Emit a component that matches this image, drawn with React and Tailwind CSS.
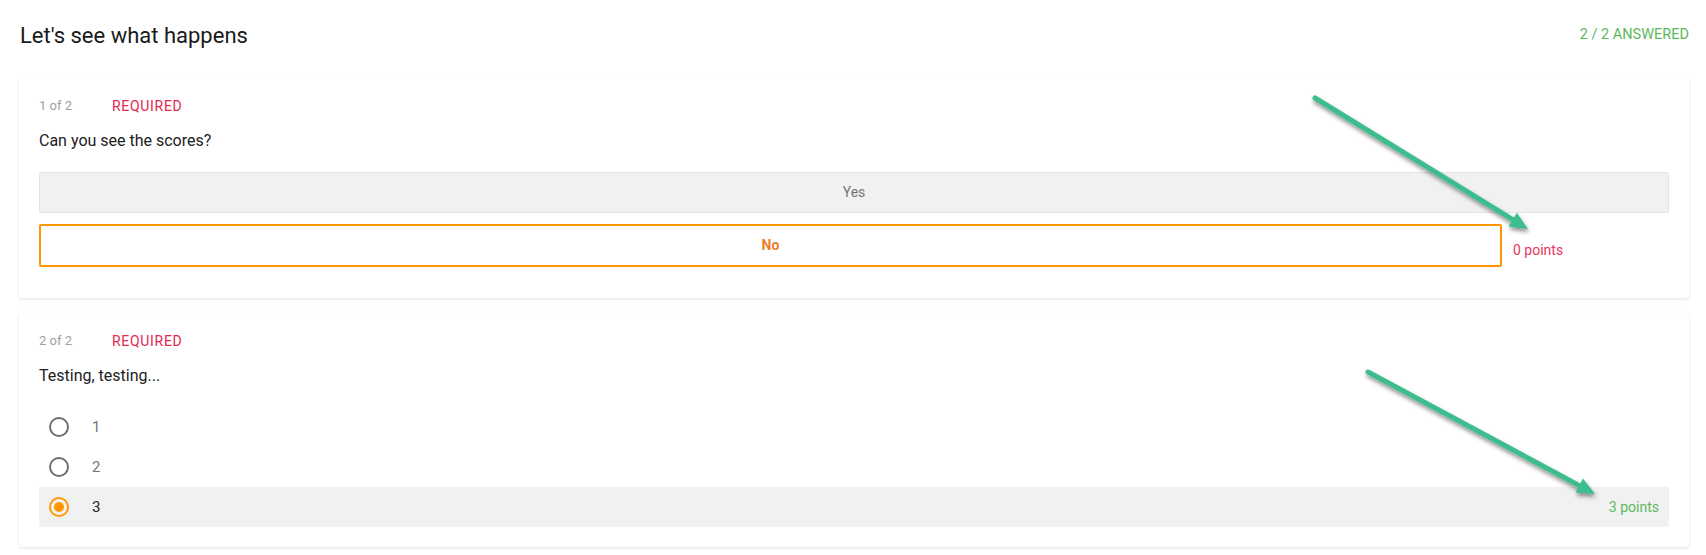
import { useState } from 'react';

const questions = [
  { id: 1, type: 'buttons', text: 'Can you see the scores?', options: ['Yes', 'No'], selected: 'No', points: 0 },
  { id: 2, type: 'radio', text: 'Testing, testing...', options: ['1', '2', '3'], selected: '3', points: 3 },
];

const Meta = ({ index, total }) => (
  <div className="flex items-center h-[20px]">
    <span className="w-[73px] text-[13px] text-[#9e9e9e]">{index} of {total}</span>
    <span className="text-[14px] text-[#e2284f] tracking-[0.7px]">REQUIRED</span>
  </div>
);

const ButtonQuestion = ({ q }) => (
  <div className="mt-[19px] flex flex-col gap-[11px] pb-[11px]">
    {q.options.map(opt => opt === q.selected ? (
      <div key={opt} className="flex items-center">
        <button className="flex-1 h-[43px] border-2 border-[#ff9800] rounded-[2px] bg-white text-[14px] font-bold text-[#ee7d2a]">
          {opt}
        </button>
        <span className="w-[167px] shrink-0 pl-[11px] pt-[10px] text-[14px] text-[#e8355b]">{q.points} points</span>
      </div>
    ) : (
      <button key={opt} className="h-[41px] w-full border border-[#e3e3e3] rounded-[2px] bg-[#f1f1f1] text-[14px] text-[#757575]">
        {opt}
      </button>
    ))}
  </div>
);

const RadioQuestion = ({ q }) => (
  <div className="mt-[19px] flex flex-col">
    {q.options.map(opt => {
      const on = opt === q.selected;
      return (
        <div key={opt} className={`flex items-center h-[40px] pl-[10px] pr-[10px] rounded-[2px] ${on ? 'bg-[#f1f1f1]' : ''}`}>
          <span className={`w-[20px] h-[20px] rounded-full border-2 flex items-center justify-center ${on ? 'border-[#ff9800]' : 'border-[#6e6e6e]'}`}>
            {on && <span className="w-[10px] h-[10px] rounded-full bg-[#ff9800]" />}
          </span>
          <span className={`ml-[23px] text-[15px] ${on ? 'text-[#212121]' : 'text-[#757575]'}`}>{opt}</span>
          {on && <span className="ml-auto text-[14px] text-[#5cb85c]">{q.points} points</span>}
        </div>
      );
    })}
  </div>
);

const Arrow = ({ x1, y1, x2, y2 }) => {
  const dx = x2 - x1, dy = y2 - y1;
  const len = Math.hypot(dx, dy);
  const ux = dx / len, uy = dy / len;
  const bx = x2 - ux * 18, by = y2 - uy * 18;
  const px = -uy * 8, py = ux * 8;
  return (
    <g>
      <line x1={x1} y1={y1} x2={bx + ux * 2} y2={by + uy * 2} stroke="#3dbd8e" strokeWidth="5" strokeLinecap="round" />
      <polygon points={`${x2},${y2} ${bx + px},${by + py} ${bx - px},${by - py}`} fill="#3dbd8e" />
    </g>
  );
};

export default function App() {
  const [answers] = useState(questions.length);

  return (
    <div className="relative bg-white min-h-[555px] pl-[19px] pr-[17px] font-['Roboto',sans-serif] text-[#212121]">
      <div className="flex items-center justify-between h-[70px] mb-[8px]">
        <h1 className="text-[22px] font-normal pl-[1px] text-[#1a1a1a]">Let's see what happens</h1>
        <span className="text-[14.5px] text-[#5cb85c]">{answers} / {questions.length} ANSWERED</span>
      </div>

      <div className="flex flex-col gap-[15px]">
        {questions.map((q, i) => (
          <div key={q.id} className="bg-white rounded-[3px] shadow-[0_1px_3px_rgba(0,0,0,0.12)] px-[20px] pt-[18px] pb-[20px]">
            <Meta index={i + 1} total={questions.length} />
            <p className="mt-[13px] text-[16px] leading-[24px]">{q.text}</p>
            {q.type === 'buttons' ? <ButtonQuestion q={q} /> : <RadioQuestion q={q} />}
          </div>
        ))}
      </div>

      {/* annotation arrows */}
      <svg className="absolute inset-0 pointer-events-none" width="1706" height="555" viewBox="0 0 1706 555">
        <defs>
          <filter id="sh" x="-10%" y="-10%" width="120%" height="130%">
            <feDropShadow dx="1" dy="3" stdDeviation="2" floodColor="#000" floodOpacity="0.45" />
          </filter>
        </defs>
        <g filter="url(#sh)">
          <Arrow x1={1315} y1={98} x2={1528} y2={229} />
          <Arrow x1={1368} y1={372} x2={1595} y2={494} />
        </g>
      </svg>
    </div>
  );
}
